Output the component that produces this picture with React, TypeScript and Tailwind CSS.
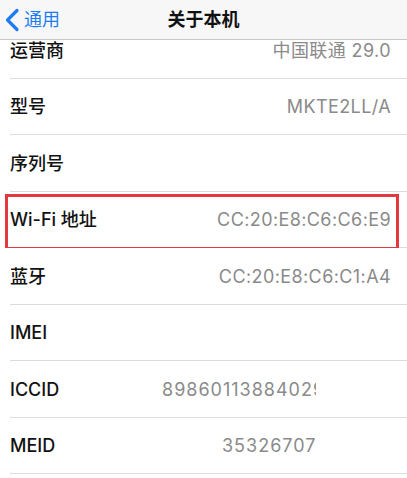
import React from "react";

type Row = {
  label: string;
  value?: string;
  // some values are cut off mid-line; start/end give the visible window
  clip?: { start: number; end: number };
  marked?: boolean;
};

const rows: Row[] = [
  { label: "运营商", value: "中国联通 29.0" },
  { label: "型号", value: "MKTE2LL/A" },
  { label: "序列号" },
  { label: "Wi-Fi 地址", value: "CC:20:E8:C6:C6:E9", marked: true },
  { label: "蓝牙", value: "CC:20:E8:C6:C1:A4" },
  { label: "IMEI" },
  { label: "ICCID", value: "89860113884029", clip: { start: 162, end: 316 } },
  { label: "MEID", value: "35326707", clip: { start: 222, end: 316 } },
];

const font = { fontFamily: 'Inter, "Noto Sans CJK SC", sans-serif' };

const BackChevron = () => (
  <svg width="16" height="24" viewBox="0 0 16 24" fill="none">
    <path
      d="M13 2.5 L3.5 12 L13 21.5"
      stroke="#1c7cf4"
      strokeWidth="3.2"
      strokeLinecap="round"
      strokeLinejoin="round"
    />
  </svg>
);

const renderRow = (row: Row) => (
  <div key={row.label} className="relative h-[56.5px] bg-white">
    <div className="flex h-full items-center pl-[10px] pr-[16px]">
      <span className="text-[18px] font-medium text-[#111]">{row.label}</span>
      {row.value && !row.clip && (
        <span className="ml-auto text-[18px] tracking-[0.4px] text-[#8a8a8a]">
          {row.value}
        </span>
      )}
      {row.value && row.clip && (
        <div
          className="absolute top-0 flex h-full items-center overflow-hidden whitespace-nowrap text-[18px] tracking-[1px] text-[#8a8a8a]"
          style={{ left: row.clip.start, width: row.clip.end - row.clip.start }}
        >
          {row.value}
        </div>
      )}
    </div>
    <div className="absolute bottom-0 left-[10px] right-0 h-px bg-[#dcdcdf]" />
    {row.marked && (
      <div className="absolute top-[2.5px] bottom-[-2px] left-[5px] right-[8px] border-[3px] border-[#e2383f]" />
    )}
  </div>
);

export default function App() {
  return (
    <div className="flex h-[478px] w-[407px] flex-col overflow-hidden bg-white" style={font}>
      <div className="relative flex h-[40px] shrink-0 items-center border-b border-[#c9c9cd] bg-[#f7f7f7]">
        <div className="flex items-center gap-[4px] pl-[4px] text-[18px] text-[#1c7cf4]">
          <BackChevron />
          <span>通用</span>
        </div>
        <span className="absolute left-1/2 -translate-x-1/2 text-[18px] font-semibold text-[#111]">
          关于本机
        </span>
      </div>
      <div className="flex-1 overflow-hidden">
        <div className="-mt-[18px]">{rows.map(renderRow)}</div>
      </div>
    </div>
  );
}
